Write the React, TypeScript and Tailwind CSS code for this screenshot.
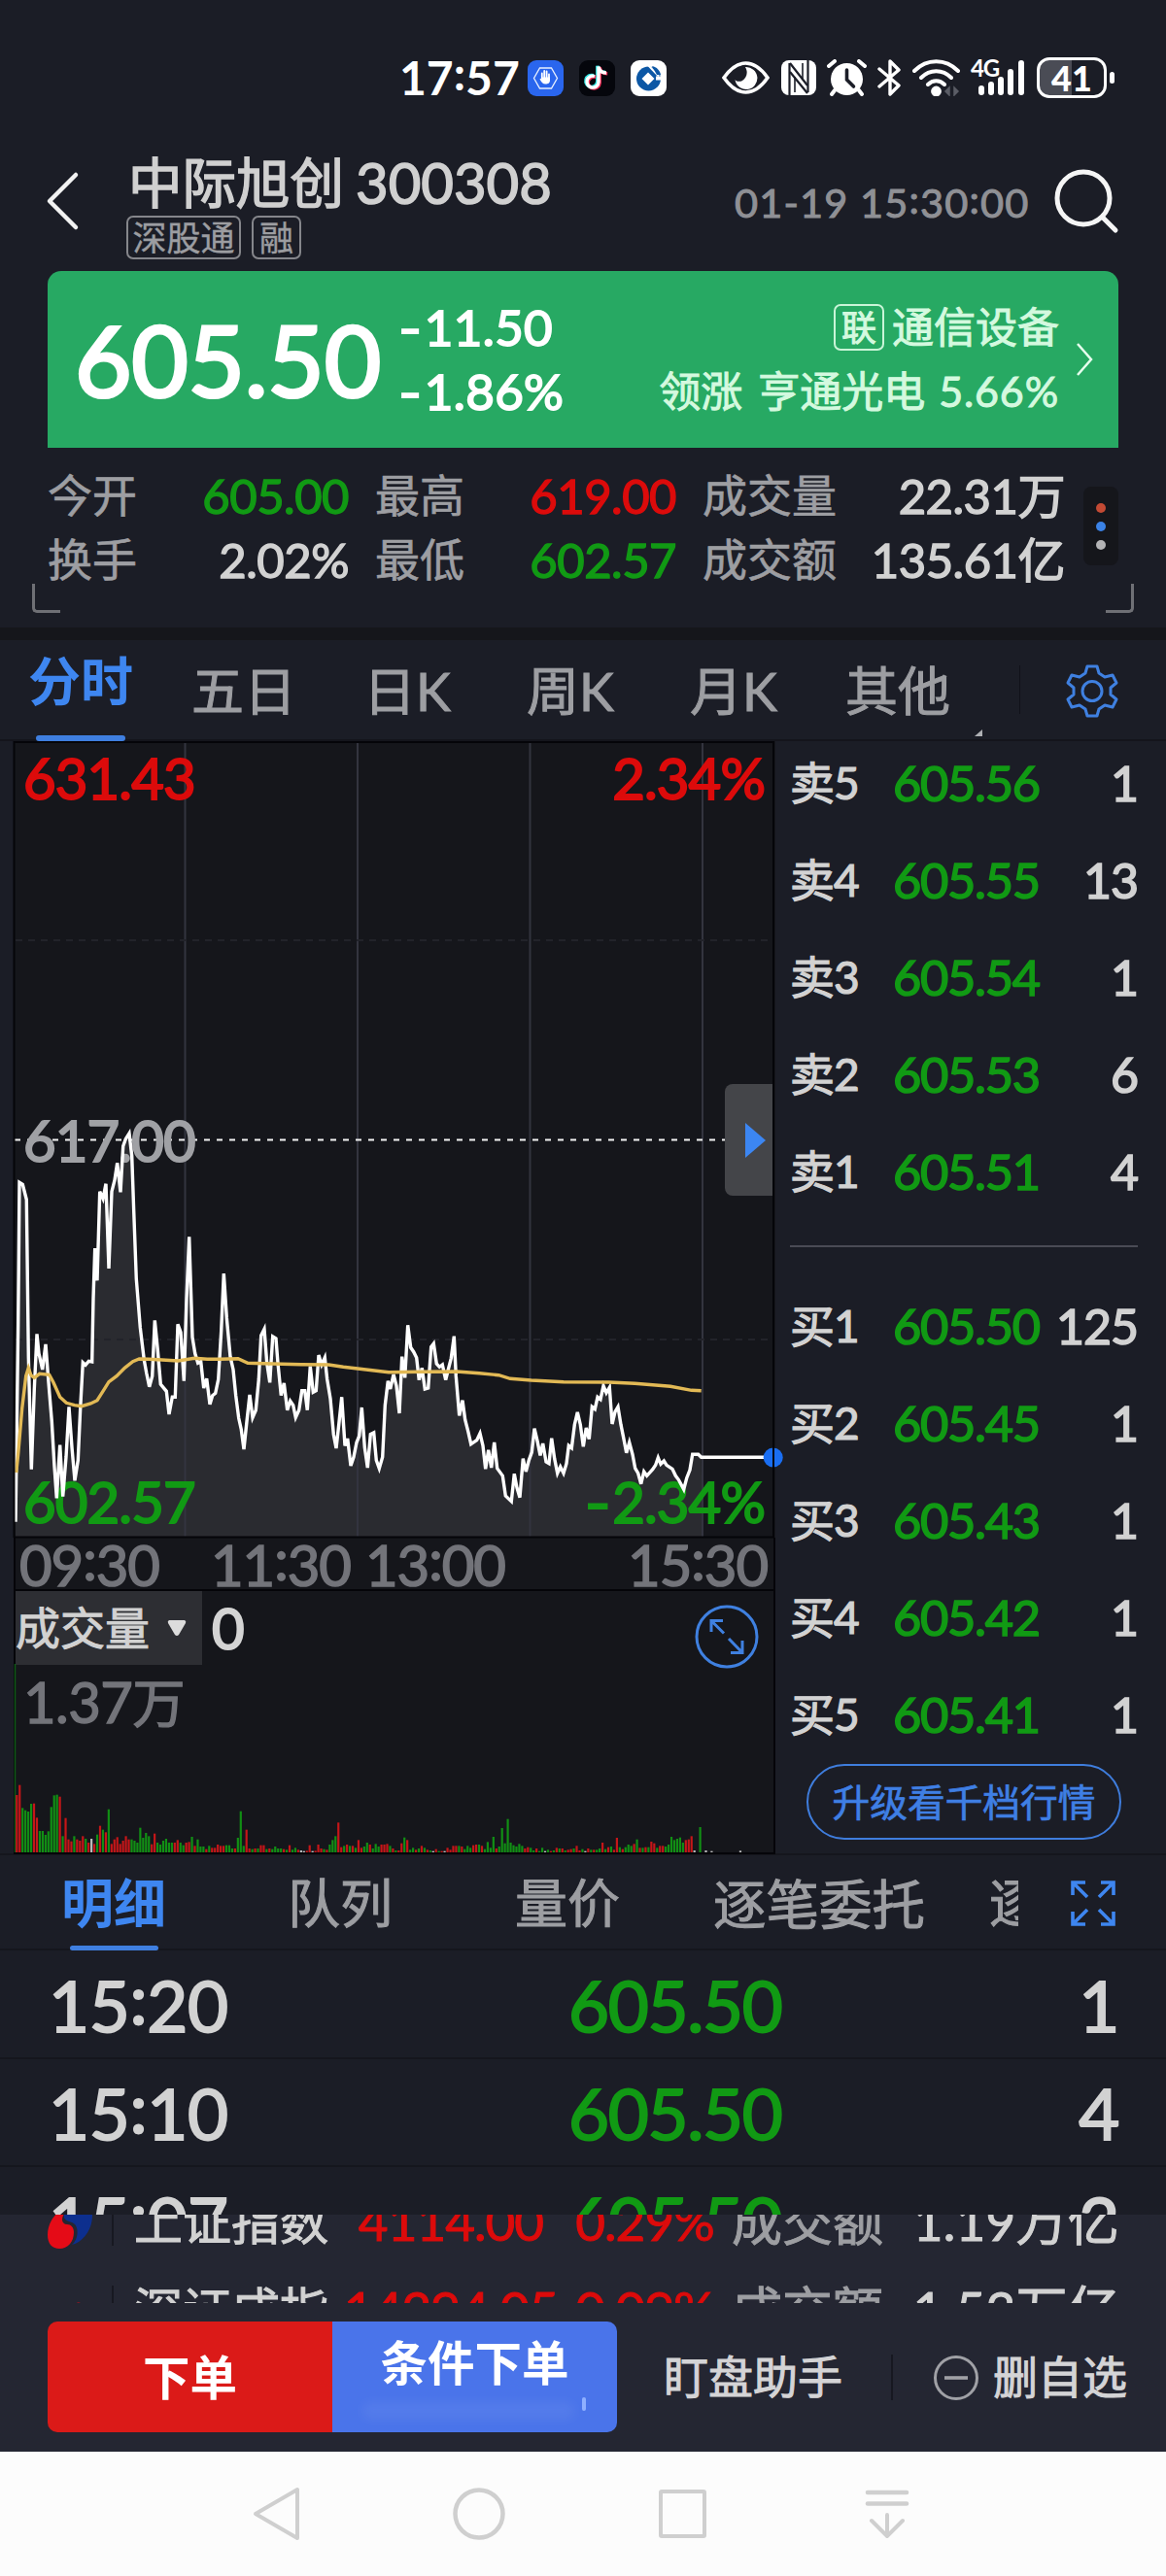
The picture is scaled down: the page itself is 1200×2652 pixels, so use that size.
import React from "react";

type Pt = [number, number];

const parse = (s: string, dx = 0, dy = 0): Pt[] =>
  s.trim().split(/\s+/).map((p) => {
    const [x, y] = p.split(",").map(Number);
    return [(x + dx) / 3, 1130 + (y + dy) / 3] as Pt;
  });
const join = (pts: Pt[]) => pts.map(([x, y]) => `${x.toFixed(1)},${y.toFixed(1)}`).join(" ");

const price: Pt[] = [
  ...parse(`48,1310 50,1160 56,700 60,262 70,268 82,315 88,800 97,1148 106,900 114,730 120,790 131,840 141,762 150,880 160,1000
  168,1140 175,1237 185,1073 194,1232 204,1110 213,955 222,1080 231,1183 241,1120 248,960 256,818 264,826 274,814 284,816
  288,620 293,465 300,565 308,290 318,312 327,266 336,528 345,290 354,255 362,202 372,292 380,150 388,128 399,110 407,180
  413,350 421,560 433,710 445,810 452,850 461,893 470,860 478,688 487,780 496,885 514,907 522,978 532,925 541,925 549,700
  558,725 568,875 576,620 584,430 594,740 602,790 611,820 620,815 629,897 638,868 648,947 656,920 665,913 674,870 683,720
  691,543 700,680 711,800 720,840 728,920 737,990 745,1025 753,1086 762,1000 771,918 780,988 790,965 799,870 806,735 816,715
  824,820 833,880 842,738 852,744 858,820 868,920 877,882 887,965 896,937 905,950 913,988 923,965 932,905 941,905 949,965
  958,830 967,910 976,905 984,795 993,825 1003,803 1010,870 1020,930 1030,1040 1038,1083 1046,1010 1055,925 1065,1075
  1073,1053 1083,1137 1092,1110 1101,1065 1109,1045 1117,957 1126,1080 1135,1143 1144,1040 1154,1035 1162,1120 1171,1145
  1181,1110 1189,950 1198,875 1205,900 1215,855 1224,890 1233,975 1241,800 1250,865`),
  ...parse(`59,343 68,412 77,425 86,443 94,512 103,475 112,540 122,537 131,410 139,400 148,462 157,472 166,465 176,512
  184,480 193,445 202,377 208,500 218,622 228,575 236,635 245,670 254,710 272,698 282,677 291,715 299,787 308,728 317,783
  326,705 335,785 352,808 361,870 379,887 388,802 396,845 405,875 415,755 424,795 433,760 442,735 450,662 459,700 468,745
  476,708 486,765 495,770 503,692 512,755 521,800 530,780 540,800 549,770 556,715 565,722 574,650 583,612 592,650 601,718
  610,660 619,695 628,595 637,602 645,565 654,572 663,530 672,552 682,535 690,648 699,610 708,595 717,650 726,695 734,737
  743,705 753,742 761,785 770,800 779,833 788,795 797,808 815,788 824,775 832,752 840,772 850,762 858,775 876,787 886,808
  895,820 911,850 920,815 930,790 938,742 956,742 965,751`, 1200, 360),
];

const average: Pt[] = [
  ...parse(`50,1158 56,1100 68,960 80,860 88,835 96,858 106,865 122,853 152,856 165,880 185,925 205,943 230,950 252,953
  280,945 300,935 316,910 336,878 360,860 385,835 410,815 430,807 460,808 500,810 550,813 600,805 640,808 680,808 735,806
  765,820 840,822 930,824 1015,825 1060,832 1130,840 1200,848`),
  ...parse("100,487 210,486 280,491 340,497 375,508 440,513 540,518 680,519 760,523 870,532 935,544 965,545", 1200, 360),
];

// One token per minute: colour letter followed by bar height in thirds of a pixel.
const volume = `r177 r208 g137 g130 g126 g150 r151 r107 g66 g66 g54 g65 g140 g176 g178 r172 g50 r106 r40 r34 g50 r40 r36 r50 g42
r30 w42 r26 g55 r82 g70 r62 g133 r26 r40 r47 r26 r36 r50 r40 g40 g36 g30 g76 g45 g60 g50 r25 r58 g30 g24 g36 g42 g30 g30 r30 r38
g30 g22 r30 r32 g48 r20 g40 g18 g18 r10 g20 r14 r14 r24 r20 r20 g22 g22 g12 r12 g45 g127 g20 r70 r12 g10 r12 g12 r22 r22 g10 r12
g10 g18 g12 g12 r10 g8 r22 g8 g14 r8 w6 w4 r5 r22 w4 r5 r24 r12 g10 r8 g24 g38 g50 r92 r16 g20 r24 g20 r20 g14 r38 r14 g18 g30 r24
g12 g26 g18 r24 r24 r26 g20 r12 g6 r6 r28 g46 r38 g8 g14 r8 g12 r20 g14 r8 g6 w4 r10 g4 r4 w4 r14 r8 r20 r20 g20 r18 g10 g20 g14
r22 r24 g24 r20 g10 g32 g14 g48 r12 g18 g75 g28 g103 g30 g22 g18 g26 g20 r12 r16 g14 g6 r12 g4 g14 w4 g8 r4 g6 r14 g12 r12 g6 r8
r10 g12 r20 r6 g10 w4 r12 g8 r8 g8 g12 r30 g10 r16 g18 r8 r45 g16 r10 g16 g24 g20 r26 g40 r14 g14 r16 g16 r33 r28 g14 r20 r20 g18
g24 g48 g38 g42 g46 g30 r38 r40 r50 w6 g0 g78 w0 w6 w0 w4 w0 w0 w0 w0 w0 w0 w0 w0 w0 w5`.trim().split(/\s+/);

const barColor: Record<string, string> = { r: "#c51618", g: "#118f14", w: "#bcbcbe" };

/** Clock text with vertically centred colons. */
function Clock({ t }: { t: string }) {
  return (
    <>
      {t.split("").map((c, i) =>
        c === ":" ? (
          <span key={i} className="relative -top-[0.1em]">:</span>
        ) : (
          <React.Fragment key={i}>{c}</React.Fragment>
        )
      )}
    </>
  );
}

/** Hyphen stretched to the width of the figures' minus sign. */
function Minus() {
  return <span className="mr-[0.05em] inline-block origin-right scale-x-[1.25]">-</span>;
}

function StatusBar() {
  return (
    <div className="flex h-[160px] items-center pl-[411px] text-white [-webkit-text-stroke:0px]">
      <span className="w-[132px] text-[48px] font-bold"><Clock t="17:57" /></span>
      <svg className="mr-4" width="37" height="37" viewBox="0 0 37 37">
        <rect width="37" height="37" rx="9" fill="#2a66ee" />
        <path d="M12.500 8h12l6 10.500-6 10.500h-12l-6-10.500z" fill="none" stroke="#e8f0ff" strokeWidth="1.300" />
        <path d="M14.800 19v-5.500M17.200 18v-7M19.600 18v-6.500M22 19v-4.500" stroke="#fff" strokeWidth="1.800" strokeLinecap="round" />
        <path d="M14 17.500h9v3c0 3-2 4-4.500 4-3 0-4-1.500-6-5l1-.8 1.500 1.500z" fill="#fff" />
      </svg>
      <svg className="mr-4" width="37" height="37" viewBox="0 0 37 37">
        <rect width="37" height="37" rx="9" fill="#05060c" />
        <g fill="none" strokeWidth="3.400">
          <path d="M16 16.500a6 6 0 1 0 4 6V6.500c.5 4 3.500 6.500 8 6.500" stroke="#35e6e4" transform="translate(-1.200 -.8)" />
          <path d="M16 16.500a6 6 0 1 0 4 6V6.500c.5 4 3.500 6.500 8 6.500" stroke="#f5305a" transform="translate(1.200 .8)" />
          <path d="M16 16.500a6 6 0 1 0 4 6V6.500c.5 4 3.500 6.500 8 6.500" stroke="#fff" />
        </g>
      </svg>
      <svg width="37" height="37" viewBox="0 0 37 37">
        <rect width="37" height="37" rx="9" fill="#fff" />
        <circle cx="18.500" cy="19" r="12.500" fill="#0c57a5" />
        <path d="M18 12.500l6.500 6.500-6.500 6.500-6.500-6.500z" fill="#fff" />
        <path d="M26 16.500h8v4h-8z" fill="#fff" />
        <path d="M18 5l11 11.500" stroke="#fff" strokeWidth="2" />
        <path d="M22 6c5 1 8 4.500 9 9h-4z" fill="#0c57a5" />
      </svg>
      <svg className="ml-[57px]" width="49" height="34" viewBox="0 0 49 34">
        <path d="M2 17C9 7 16 2 24.500 2S40 7 47 17c-7 10-14 15-22.500 15S9 27 2 17z" fill="none" stroke="#fff" strokeWidth="3.600" />
        <path d="M24 6a11.500 11.500 0 1 1-10.500 13c1 2 5 2.500 7.500 1 4-2.500 6.500-8 3-14z" fill="#fff" />
      </svg>
      <svg className="ml-3" width="36" height="36" viewBox="0 0 36 36">
        <rect width="36" height="36" rx="8" fill="#fff" />
        <path d="M8.500 3v33M27.500 0v33" stroke="#1b1d27" strokeWidth="2.200" />
        <path d="M9 3l18 23M9 12l18 22" stroke="#1b1d27" strokeWidth="2.200" />
        <path d="M14 17v16M22 19V3" fill="none" stroke="#1b1d27" strokeWidth="1.600" />
      </svg>
      <svg className="ml-[11px]" width="41" height="38" viewBox="0 0 41 38">
        <circle cx="20.500" cy="20.500" r="16.500" fill="#fff" />
        <path d="M2 7l6-5M39 7l-6-5M8 32l-3 4M33 32l3 4" stroke="#fff" strokeWidth="4" strokeLinecap="round" />
        <path d="M20.500 11v10l7 7" fill="none" stroke="#1b1d27" strokeWidth="3.600" strokeLinecap="round" />
      </svg>
      <svg className="ml-[11px]" width="25" height="38" viewBox="0 0 25 38" fill="none" stroke="#fff" strokeWidth="3.400" strokeLinecap="round" strokeLinejoin="round">
        <path d="M2 10l20 17-9 9V2l9 9L2 28" />
      </svg>
      <svg className="ml-[11px]" width="50" height="38" viewBox="0 0 50 38" fill="none" stroke="#fff" strokeWidth="4" strokeLinecap="round">
        <path d="M2 12c13-13 32-13 45 0M9 19c9-9 22-9 31 0M16 26c5-5 12-5 17 0" />
        <circle cx="24.500" cy="33" r="3.400" fill="#fff" stroke="#fff" />
        <path d="M38 29v8l-4-4zM43 37v-8l4 4z" fill="#5b5d66" stroke="#5b5d66" strokeWidth="1.500" />
      </svg>
      <div className="relative ml-[10px] h-[40px] w-[56px]">
        <span className="absolute -top-[5px] left-0 text-[24px] font-bold leading-[30px] tracking-[-0.05em]">4G</span>
        <svg className="absolute bottom-0 left-0" width="56" height="40" viewBox="0 0 56 40" stroke="#fff" strokeWidth="6" strokeLinecap="round">
          <path d="M11 31v4M21 27v8M31 22v13M41 14v21M52 5v30" />
        </svg>
      </div>
      <div className="ml-[12px] flex h-[42px] w-[72px] items-center justify-center rounded-[13px] border-[3px] border-white bg-[linear-gradient(90deg,#4a4c55_50%,transparent_50%)] text-[36px] font-black leading-none">41</div>
      <div className="ml-[3px] h-3 w-[5px] rounded-full bg-white" />
    </div>
  );
}

function Header() {
  return (
    <div className="flex h-[119px]">
      <svg className="ml-[46px] mt-[15px] shrink-0" width="38" height="64" viewBox="0 0 38 64" fill="none" stroke="#f2f2f2" strokeWidth="4.500" strokeLinejoin="round" strokeLinecap="round">
        <path d="M32 5L5 32l27 27" />
      </svg>
      <div className="ml-[46px] w-[626px] shrink-0">
        <div className="flex h-[55px] items-center pl-[2px] text-[#d0d0d0] [-webkit-text-stroke:1.5px]">
          <span className="text-[55.500px] leading-none">中际旭创</span>
          <span className="ml-[12px] text-[58px] leading-none">300308</span>
        </div>
        <div className="mt-[7px] flex gap-[11px] text-[35px] leading-[41px] text-[#9c9da1] [-webkit-text-stroke:0.4px]">
          <span className="flex h-[45px] w-[118px] items-center justify-center rounded-[7px] border-2 border-[#85868b]">深股通</span>
          <span className="flex h-[45px] w-[51px] items-center justify-center rounded-[7px] border-2 border-[#85868b]">融</span>
        </div>
      </div>
      <span className="mt-[18px] w-[328px] shrink-0 whitespace-nowrap text-[41.500px] leading-[60px] tracking-[0.027em] text-[#8f9095]"><Clock t="01-19 15:30:00" /></span>
      <svg className="mt-[13px] shrink-0" width="68" height="68" viewBox="0 0 68 68" fill="none" stroke="#f5f5f5" strokeWidth="5" strokeLinecap="round">
        <circle cx="31" cy="31" r="27" />
        <path d="M51 51l13 13" />
      </svg>
    </div>
  );
}

function QuoteCard() {
  return (
    <div className="mx-[49px] flex h-[182px] items-center rounded-t-[14px] bg-[#27a963] text-white">
      <span className="ml-[28px] w-[338px] text-[101px] leading-none tracking-[-0.003em] [-webkit-text-stroke:3.200px]">605.50</span>
      <div className="flex w-[206px] flex-col text-[51px] leading-[66px] tracking-[0.007em] [-webkit-text-stroke:1.8px]">
        <span><Minus />11.50</span>
        <span><Minus />1.86%</span>
      </div>
      <div className="flex flex-1 flex-col items-end text-[43px] leading-[66px] text-[#d4f9df]">
        <div className="flex items-center">
          <span className="mr-2 flex h-12 w-[52px] items-center justify-center rounded-[7px] border-2 border-[#c9f5d7] text-[36px]">联</span>
          <span>通信设备</span>
        </div>
        <span className="whitespace-nowrap">领涨<span className="inline-block w-4" />亨通光电<span className="inline-block w-[14px]" /><span className="tracking-[0.02em]">5.66%</span></span>
      </div>
      <svg className="ml-4 mr-6" width="21" height="36" viewBox="0 0 21 36" fill="none" stroke="#e6ffee" strokeWidth="2.500">
        <path d="M3 2l14 16L3 34" />
      </svg>
    </div>
  );
}

const stats = [
  [["今开", "605.00", "g"], ["最高", "619.00", "r"], ["成交量", "22.31万", "w"]],
  [["换手", "2.02%", "w"], ["最低", "602.57", "g"], ["成交额", "135.61亿", "w"]],
];
const tone: Record<string, string> = { g: "text-[#119a14]", r: "text-[#dc0b0b]", w: "text-[#d2d2d2]" };

function Stats() {
  return (
    <div className="h-[185px] pt-[16px]">
      <div className="flex h-[132px]">
        <div className="ml-[49px] w-[1047px]">
          {stats.map((row, i) => (
            <div key={i} className="grid h-[66px] grid-cols-[310px_310px_373px] gap-x-[27px] text-[46px] leading-[66px]">
              {row.map(([k, v, c]) => (
                <div key={k} className="flex justify-between">
                  <span className="text-[#9d9ea2] [-webkit-text-stroke:0.7px]">{k}</span>
                  <span className={`text-[49px] tracking-[-0.01em] [-webkit-text-stroke:1.400px] ${tone[c]}`}>{v}</span>
                </div>
              ))}
            </div>
          ))}
        </div>
        <div className="ml-[19px] mt-[24px] flex h-[81px] w-[36px] flex-col items-center justify-center gap-[9px] rounded-lg bg-[#15161b]">
          <span className="h-[10px] w-[10px] rounded-full bg-[#c34a34]" />
          <span className="h-[10px] w-[10px] rounded-full bg-[#3b82e6]" />
          <span className="h-[10px] w-[10px] rounded-full bg-[#b4b4b6]" />
        </div>
      </div>
      <div className="mx-[33px] -mt-[8px] flex justify-between">
        <span className="h-[30px] w-[29px] rounded-bl-[5px] border-b-[3px] border-l-[3px] border-[#6f7075]" />
        <span className="h-[30px] w-[29px] rounded-br-[5px] border-b-[3px] border-r-[3px] border-[#6f7075]" />
      </div>
    </div>
  );
}

function ChartTabs() {
  return (
    <div className="flex h-[104px] border-b-[2px] border-[#14151c] text-[54px] leading-none text-[#9d9ea2]">
      <div className="ml-[29px] flex w-[108px] flex-col items-center pt-[16px] font-bold text-[#3e86f0] [-webkit-text-stroke:0px]">
        分时
        <span className="mt-[28px] h-[6px] w-[92px] shrink-0 rounded-full bg-[#3f7fe0]" />
      </div>
      <span className="ml-[60px] mt-[26px] w-[177px]">五日</span>
      <span className="mt-[26px] w-[168px]">日K</span>
      <span className="mt-[26px] w-[168px]">周K</span>
      <span className="mt-[26px] w-[160px]">月K</span>
      <span className="mt-[26px] w-[133px]">其他</span>
      <svg className="mt-[92px]" width="8" height="7" viewBox="0 0 8 7"><path d="M8 0v7H0z" fill="#aeb0b4" /></svg>
      <span className="ml-[38px] mt-[26px] h-[50px] w-px bg-[#101119]" />
      <svg className="ml-[46px] mt-[24px]" width="56" height="56" viewBox="0 0 56 56" fill="none" stroke="#3f80e0" strokeWidth="3" strokeLinejoin="round">
        <path d="M23 3h10l2 7 6 4 8-2 4 8-6 5v7l6 5-4 8-8-2-6 4-2 7H23l-2-7-6-4-8 2-4-8 6-5v-7l-6-5 4-8 8 2 6-4z" />
        <circle cx="28" cy="28.500" r="10" />
      </svg>
    </div>
  );
}

function PriceChart() {
  const label = "absolute text-[58px] leading-[60px] tracking-[-0.015em] [-webkit-text-stroke:2px]";
  return (
    <div className="relative h-[820px]">
      <svg className="absolute inset-0" width="784" height="820" viewBox="14 763 784 820">
        <polygon points={`16,1582 ${join(price)} 723,1582`} fill="#2a2b30" />
        <path d="M190.500 765V1582M368 765V1582M545.500 765V1582M723 765V1582" stroke="#33343f" strokeWidth="2" />
        <path d="M16 968H794M16 1379H794" stroke="#22232a" strokeWidth="2" strokeDasharray="7 6" />
        <path d="M15 1173.500H796" stroke="#f2f2f2" strokeWidth="1.800" strokeDasharray="6 7" />
      </svg>
      <span className={`${label} left-[10px] top-[8px] text-[#dc0b0b]`}>631.43</span>
      <span className={`${label} right-[11px] top-[8px] text-[#dc0b0b]`}>2.34%</span>
      <span className={`${label} left-[10px] top-[381px] text-[#a0a1a5]`}>617.00</span>
      <span className={`${label} left-[10px] top-[753px] text-[#119a14]`}>602.57</span>
      <span className={`${label} right-[11px] top-[753px] text-[#119a14]`}><Minus />2.34%</span>
      <div className="absolute right-[2px] top-[353px] flex h-[115px] w-[50px] items-center rounded-l-[8px] bg-[#444549] pl-[21px]">
        <svg width="22" height="38" viewBox="0 0 22 38"><path d="M0 1l21 18L0 37z" fill="#3c86f2" /></svg>
      </div>
      <svg className="absolute inset-0 overflow-visible" width="784" height="820" viewBox="14 763 784 820" fill="none">
        <polyline points={`${join(price)} 796,1500.300`} stroke="#fff" strokeWidth="3.400" />
        <polyline points={join(average)} stroke="#e2b955" strokeWidth="3.400" />
        <circle cx="795.700" cy="1500.500" r="10" fill="#1a6ef2" />
        <path d="M14.500 763V1583M796 763V1583M14 764H797M14 1582.500H797" stroke="#050509" strokeWidth="2" />
      </svg>
    </div>
  );
}

function VolumeChart() {
  return (
    <div className="flex h-[271px] flex-col border-x-[2px] border-b-[2px] border-[#050509]">
      <div className="flex h-[76px]">
        <div className="flex w-[192px] items-center bg-[#2d2e33] text-[46px] leading-none text-[#d2d2d2]">
          <span>成交量</span>
          <svg className="ml-[18px]" width="20" height="18" viewBox="0 0 20 18"><path d="M2 1h16q2 1 1 3l-7 12q-2 2-4 0L1 4Q0 2 2 1z" fill="#dcdcdc" /></svg>
        </div>
        <span className="ml-[10px] text-[58px] leading-[76px] text-[#d4d4d4] [-webkit-text-stroke:2px]">0</span>
        <svg className="ml-auto mr-[14px] mt-[13px]" width="68" height="68" viewBox="0 0 68 68" fill="none" stroke="#3f80e0" strokeWidth="3">
          <circle cx="34" cy="34" r="31" />
          <path d="M18 29V17.500h12M18 17.500l13 13M50 38v12.500H38M50 50.500L36 36" />
        </svg>
      </div>
      <span className="ml-[8px] h-[76px] whitespace-nowrap text-[54px] leading-[76px] tracking-[-0.01em] text-[#73747a] [-webkit-text-stroke:1.400px]"><span className="text-[58px]">1.37</span>万</span>
      <svg className="mt-auto" width="780" height="117" viewBox="16 1791 780 117" overflow="visible">
        <path d="M15.500 1714V1908" stroke="#0f5a16" strokeWidth="1.500" />
        {volume.map((v, i) => {
          const h = Number(v.slice(1)) / 3;
          return <rect key={i} x={16.2 + i * 2.955} y={1908 - h} width="2.200" height={h} fill={barColor[v[0]]} />;
        })}
      </svg>
    </div>
  );
}

const asks = [["卖5", "605.56", "1"], ["卖4", "605.55", "13"], ["卖3", "605.54", "1"], ["卖2", "605.53", "6"], ["卖1", "605.51", "4"]];
const bids = [["买1", "605.50", "125"], ["买2", "605.45", "1"], ["买3", "605.43", "1"], ["买4", "605.42", "1"], ["买5", "605.41", "1"]];

function BookRows({ rows }: { rows: string[][] }) {
  return (
    <>
      {rows.map(([k, p, n]) => (
        <div key={k} className="flex h-[100px] items-center leading-none text-[#d2d2d2] [-webkit-text-stroke:1.600px]">
          <span className="w-[106px] text-[46px] tracking-[-0.02em] [-webkit-text-stroke:1.200px]">{k}</span>
          <span className="text-[50.500px] tracking-[-0.025em] text-[#119a14]">{p}</span>
          <span className="ml-auto text-[50px] tracking-[-0.02em]">{n}</span>
        </div>
      ))}
    </>
  );
}

function OrderBook() {
  return (
    <div className="flex w-[358px] flex-col">
      <div className="-mt-[7px]"><BookRows rows={asks} /></div>
      <div className="mt-[26px] h-[2px] bg-[#4a4b55]" />
      <div className="mt-[31px]"><BookRows rows={bids} /></div>
      <div className="ml-[17px] mt-px flex h-[78px] w-[324px] items-center justify-center rounded-full border-2 border-[#3f7ddd] text-[38.700px] leading-none text-[#3f7fe4] [-webkit-text-stroke:0.7px]">升级看千档行情</div>
    </div>
  );
}

function DetailTabs() {
  return (
    <div className="flex h-[98px] border-b-2 border-[#15161d] text-[54px] leading-none text-[#9d9ea2]">
      <div className="ml-[63px] flex w-[108px] flex-col items-center pt-[23px] font-bold text-[#3e86f0] [-webkit-text-stroke:0px]">
        明细
        <span className="mt-[16px] h-[5px] w-[91px] shrink-0 rounded-full bg-[#3f7fe0]" />
      </div>
      <span className="ml-[125px] mt-[23px] w-[234px]">队列</span>
      <span className="mt-[23px] w-[204px]">量价</span>
      <span className="mt-[23px] w-[284px] text-[54.500px]">逐笔委托</span>
      <span className="mt-[23px] h-[60px] w-[30px] overflow-hidden">逐</span>
      <svg className="ml-[54px] mt-[26px]" width="46" height="47" viewBox="0 0 46 47" fill="none" stroke="#3e86f0" strokeWidth="3.600">
        <path d="M2 15V2h13M2 2l15 15M31 2h13v13M44 2L29 17M2 32v13h13M2 45l15-15M31 45h13V32M44 45L29 30" />
      </svg>
    </div>
  );
}

const trades = [["15:20", "605.50", "1"], ["15:10", "605.50", "4"], ["15:07", "605.50", "2"]];

function Trades() {
  return (
    <div className="h-[272px] overflow-hidden">
      {trades.map(([t, p, n]) => (
        <div key={t} className="grid h-[111.500px] grid-cols-[535px_300px_1fr] items-center border-b-2 border-[#15161d] pl-[50px] pr-[49px] pt-[2px] text-[72.500px] leading-none tracking-[-0.018em] text-[#d2d2d2] [-webkit-text-stroke:2px]">
          <span className="tracking-[-0.005em]"><Clock t={t} /></span>
          <span className="text-[#119a14]">{p}</span>
          <span className="text-right">{n}</span>
        </div>
      ))}
    </div>
  );
}

const indices = [["上证指数", "4114.00", "0.29%", "1.19万亿"], ["深证成指", "14294.05", "0.09%", "1.53万亿"]];

function IndexTicker() {
  return (
    <div className="h-[91px] overflow-hidden">
      <div className="-mt-[39px]">
        {indices.map(([name, v, pct, amt], i) => (
          <div key={name} className="flex h-[91px] items-center whitespace-nowrap pl-[49px] text-[53px] leading-none tracking-[-0.018em] text-[#d2d2d2]">
            <svg className={i === 0 ? "mt-[10px] shrink-0" : "mt-[34px] shrink-0"} width="46" height="50" viewBox="0 0 46 50">
              <path d="M24 2c12-2 22 2 22 12 0 14-9 27-21 30 7-6 8-20 0-23-7-2-9-4-8-8 1-5 4-9 7-11z" fill={i === 0 ? "#0d2f8e" : "#242632"} />
              <path d="M34 0C12 4 0 18 0 34c0 9 5 14 12 14 9 0 15-7 15-17 0-5-3-8-7-8-5 0-6-5-4-9 3-6 9-10 18-14z" fill="#e50b17" />
            </svg>
            <span className="ml-[20px] h-[50px] w-[2px] shrink-0 bg-[#171821]" />
            <span className="ml-[21px] w-[216px] shrink-0 text-[50px] tracking-normal">{name}</span>
            <span className="w-[220px] shrink-0 text-center text-[#dc0b0b]">{v}</span>
            <span className="w-[179px] shrink-0 text-center text-[#dc0b0b]">{pct}</span>
            <span className="w-[158px] shrink-0 text-[52px] tracking-normal text-[#9d9ea2]">成交额</span>
            <span className="ml-auto mr-[48px] tracking-[0.005em]">{amt}</span>
          </div>
        ))}
      </div>
    </div>
  );
}

function Actions() {
  return (
    <div className="flex h-[153px] items-start pl-[49px] pt-[19px] text-[46px] leading-none text-[#d4d4d6]">
      <div className="flex h-[114px] overflow-hidden rounded-[10px] text-[48.500px] font-bold text-white [-webkit-text-stroke:0px]">
        <div className="flex w-[293px] items-center justify-center bg-[#db1a18]">下单</div>
        <div className="relative flex w-[293px] justify-center bg-[#4a74ea] pt-[18px]">
          条件下单
          <span className="absolute bottom-[12px] left-[30px] h-[20px] w-[220px] rounded-full bg-white/5 blur-[5px]" />
          <span className="absolute bottom-[22px] right-[32px] h-[14px] w-[4px] rounded-full bg-[#8fb0ff]" />
        </div>
      </div>
      <span className="ml-[48px] mt-[34px] w-[234px]">盯盘助手</span>
      <span className="mt-[34px] h-[47px] w-[2px] bg-[#171821]" />
      <svg className="ml-[41px] mt-[34px]" width="48" height="48" viewBox="0 0 48 48" fill="none" stroke="#a0a1a6" strokeWidth="3">
        <circle cx="24" cy="24" r="21.500" />
        <path d="M12 24h24" strokeWidth="3.600" />
      </svg>
      <span className="ml-[14px] mt-[34px]">删自选</span>
    </div>
  );
}

function NavBar() {
  return (
    <div className="flex h-[128px] items-center bg-[#fcfcfc] pl-[258px]">
      <svg className="mr-[156px]" width="52" height="58" viewBox="0 0 52 58" fill="none" stroke="#cfcfcf" strokeWidth="4" strokeLinejoin="round">
        <path d="M48 4v50L5 29z" />
      </svg>
      <svg className="mr-[158px]" width="54" height="54" viewBox="0 0 54 54" fill="none" stroke="#cfcfcf" strokeWidth="4.500">
        <circle cx="27" cy="27" r="24.500" />
      </svg>
      <div className="mr-[163px] h-[50px] w-[49px] rounded-[3px] border-4 border-[#cfcfcf]" />
      <svg width="46" height="50" viewBox="0 0 46 50" fill="none" stroke="#cfcfcf" strokeWidth="4.600" strokeLinecap="round">
        <path d="M3 3h40M3 14.500h40" />
        <path d="M23 26v21M7 32l16 16 16-16" strokeWidth="4" />
      </svg>
    </div>
  );
}

export default function App() {
  return (
    <div className="h-[2652px] w-[1200px] overflow-hidden bg-[#1b1d26] font-[Lato,'Noto_Sans_CJK_SC',sans-serif] [-webkit-text-stroke:1px]">
      <StatusBar />
      <Header />
      <QuoteCard />
      <Stats />
      <div className="h-[13px] bg-[#15161b]" />
      <ChartTabs />
      <div className="flex h-[1147px] border-b-2 border-[#15161d] pl-[14px]">
        <div className="w-[784px] bg-[#15161b]">
          <PriceChart />
          <div className="flex h-[55px] border-x-[2px] border-b-[2px] border-[#050509] pl-[4px] text-[58px] leading-[55px] tracking-[-0.018em] text-[#73747a] [-webkit-text-stroke:1.600px]">
            <span className="w-[197px]"><Clock t="09:30" /></span>
            <span className="w-[159px]"><Clock t="11:30" /></span>
            <span><Clock t="13:00" /></span>
            <span className="ml-auto mr-[6px]"><Clock t="15:30" /></span>
          </div>
          <VolumeChart />
        </div>
        <div className="ml-[15px]"><OrderBook /></div>
      </div>
      <DetailTabs />
      <Trades />
      <div className="bg-[#242632]">
        <IndexTicker />
        <Actions />
      </div>
      <NavBar />
    </div>
  );
}
